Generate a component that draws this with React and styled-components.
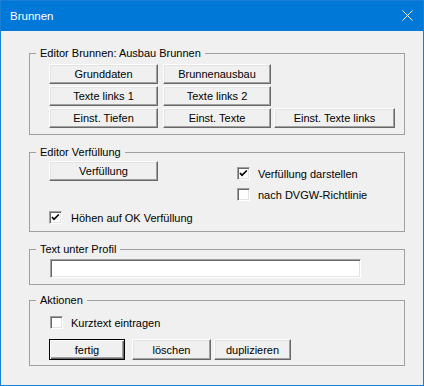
import React from 'react';
import styled, { createGlobalStyle } from 'styled-components';

const GlobalStyle = createGlobalStyle`
    html, body {
        margin: 0;
        padding: 0;
        background: #f0f0f0;
    }
    * {
        box-sizing: border-box;
    }
`;

const Window = styled.div`
    display: flex;
    flex-direction: column;
    width: 424px;
    height: 386px;
    border: 1px solid #1a7fd6;
    background: #f0f0f0;
    font-family: 'Liberation Sans', Arial, sans-serif;
    font-size: 11px;
    color: #000;
`;

const TitleBar = styled.div`
    display: flex;
    align-items: center;
    justify-content: space-between;
    height: 30px;
    padding: 0 10px 1px 9px;
    background: #0078d7;
    color: #fff;
    font-size: 11.5px;
`;

const Body = styled.div`
    display: flex;
    flex-direction: column;
    padding: 16px 18px 0 28px;
`;

const Group = styled.fieldset`
    margin: ${(p) => p.$mt || 0}px 0 0 0;
    padding: 0;
    min-width: 0;
    border: 1px solid #a0a0a0;
`;

const Legend = styled.legend`
    margin-left: 6px;
    padding: 0 4px;
    font-size: 11px;
    line-height: 13px;
`;

const GroupBody = styled.div`
    padding: ${(p) => p.$pt}px 0 ${(p) => p.$pb}px 19px;
`;

const Button = styled.button`
    width: ${(p) => p.$w}px;
    height: ${(p) => p.$h || 20}px;
    margin: 0 0 0 ${(p) => p.$ml || 0}px;
    padding: 0;
    font-family: inherit;
    font-size: 11px;
    color: #000;
    background: #f0f0f0;
    border: 1px solid;
    border-color: ${(p) => (p.$default ? '#000' : '#fff #696969 #696969 #fff')};
    box-shadow: ${(p) =>
        p.$default
            ? 'inset 1px 1px #fff, inset -1px -1px #696969, inset -2px -2px #a0a0a0'
            : 'inset -1px -1px #a0a0a0, inset 1px 1px #e3e3e3'};
    outline: none;
`;

const ButtonGrid = styled.div`
    display: grid;
    grid-template-columns: 114px 111px 121px;
    row-gap: 2px;
`;

const Columns = styled.div`
    display: flex;
`;

const LeftCol = styled.div`
    display: flex;
    flex-direction: column;
    width: 188px;
`;

const RightCol = styled.div`
    display: flex;
    flex-direction: column;
    gap: 8px;
    padding-top: 6px;
`;

const CheckRow = styled.label`
    display: flex;
    align-items: center;
    gap: ${(p) => p.$gap || 9}px;
    height: 13px;
    margin: ${(p) => p.$mt || 0}px 0 0 ${(p) => p.$ml || 0}px;
    white-space: nowrap;
`;

const Box = styled.span`
    display: flex;
    align-items: center;
    justify-content: center;
    width: 13px;
    height: 13px;
    flex: none;
    background: #fff;
    border: 1px solid;
    border-color: #a0a0a0 #fff #fff #a0a0a0;
    box-shadow: inset 1px 1px #696969, inset -1px -1px #e3e3e3;
`;

const TextField = styled.div`
    width: 311px;
    height: 19px;
    margin-left: 1px;
    background: #fff;
    border: 1px solid;
    border-color: #a0a0a0 #fff #fff #a0a0a0;
    box-shadow: inset 1px 1px #696969, inset -1px -1px #e3e3e3;
`;

const ButtonRow = styled.div`
    display: flex;
    margin-top: 10px;
`;

const Check = ({ checked, children, ...rest }) => (
    <CheckRow {...rest}>
        <Box>
            {checked && (
                <svg width="9" height="9" viewBox="0 0 9 9">
                    <polyline
                        points="1,4 3,6.3 7.8,1.5"
                        fill="none"
                        stroke="#000"
                        strokeWidth="1.7"
                    />
                </svg>
            )}
        </Box>
        <span>{children}</span>
    </CheckRow>
);

const App = () => {
    return (
        <>
            <GlobalStyle />
            <Window>
                <TitleBar>
                    <span>Brunnen</span>
                    <svg width="11" height="11" viewBox="0 0 11 11">
                        <path d="M0.5 0.5 L10.5 10.5 M10.5 0.5 L0.5 10.5" stroke="#fff" strokeWidth="1" />
                    </svg>
                </TitleBar>
                <Body>
                    <Group>
                        <Legend>Editor Brunnen: Ausbau Brunnen</Legend>
                        <GroupBody $pt={4} $pb={6}>
                            <ButtonGrid>
                                <Button $w={109}>Grunddaten</Button>
                                <Button $w={108}>Brunnenausbau</Button>
                                <span />
                                <Button $w={109}>Texte links 1</Button>
                                <Button $w={108}>Texte links 2</Button>
                                <span />
                                <Button $w={109}>Einst. Tiefen</Button>
                                <Button $w={108}>Einst. Texte</Button>
                                <Button $w={121}>Einst. Texte links</Button>
                            </ButtonGrid>
                        </GroupBody>
                    </Group>

                    <Group $mt={11}>
                        <Legend>Editor Verfüllung</Legend>
                        <GroupBody $pt={2} $pb={7}>
                            <Columns>
                                <LeftCol>
                                    <Button $w={109}>Verfüllung</Button>
                                    <Check checked $mt={30}>
                                        Höhen auf OK Verfüllung
                                    </Check>
                                </LeftCol>
                                <RightCol>
                                    <Check checked $gap={8}>
                                        Verfüllung darstellen
                                    </Check>
                                    <Check $gap={8}>nach DVGW-Richtlinie</Check>
                                </RightCol>
                            </Columns>
                        </GroupBody>
                    </Group>

                    <Group $mt={11}>
                        <Legend>Text unter Profil</Legend>
                        <GroupBody $pt={3} $pb={6}>
                            <TextField />
                        </GroupBody>
                    </Group>

                    <Group $mt={9}>
                        <Legend>Aktionen</Legend>
                        <GroupBody $pt={9} $pb={5}>
                            <Check $ml={1} $gap={8}>
                                Kurztext eintragen
                            </Check>
                            <ButtonRow>
                                <Button $w={76} $h={21} $default>
                                    fertig
                                </Button>
                                <Button $w={79} $h={21} $ml={7}>
                                    löschen
                                </Button>
                                <Button $w={77} $h={21} $ml={3}>
                                    duplizieren
                                </Button>
                            </ButtonRow>
                        </GroupBody>
                    </Group>
                </Body>
            </Window>
        </>
    );
};

export default App;
